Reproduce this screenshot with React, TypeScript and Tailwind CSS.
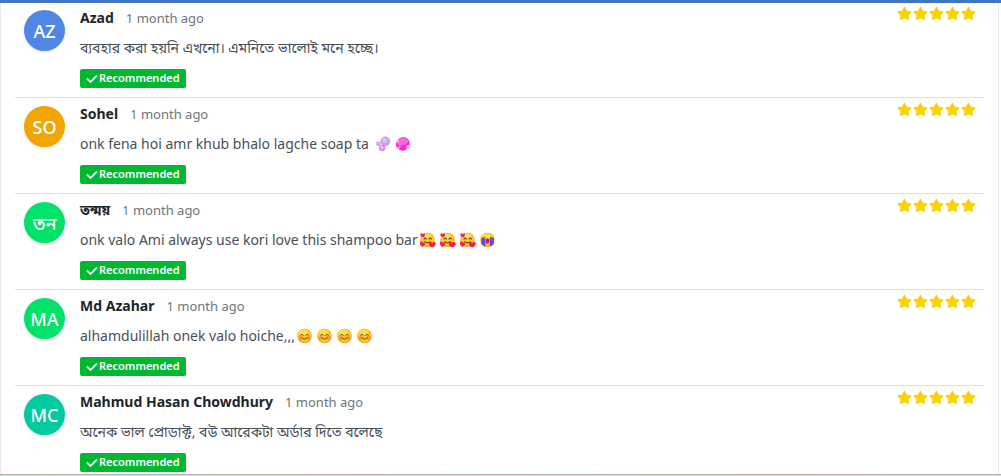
import type { ReactNode } from 'react';
import { FaCheck, FaStar } from 'react-icons/fa6';

function Emoji({ label, children }: { label: string; children: ReactNode }) {
  return (
    <svg viewBox="0 0 16 16" role="img" aria-label={label} className="size-4 shrink-0">
      {children}
    </svg>
  );
}

function Face() {
  return (
    <>
      <circle cx="7.5" cy="8" r="7.300" fill="#f9a51f" />
      <circle cx="7.200" cy="7.400" r="6.500" fill="#ffc927" />
      <ellipse cx="6.500" cy="4.400" rx="4.200" ry="2.600" fill="#ffe04a" />
    </>
  );
}

function Bubbles() {
  return (
    <Emoji label="bubbles">
      <circle cx="10.3" cy="5.3" r="4.4" fill="#cda6f3" stroke="#dc83dd" strokeWidth="0.8" />
      <circle cx="9.5" cy="4.3" r="2.200" fill="#b9d5fb" />
      <circle cx="7.2" cy="11.8" r="3" fill="#e09af0" stroke="#a98ce8" strokeWidth="0.8" />
      <circle cx="6.8" cy="11" r="1.2" fill="#f4d0fa" />
      <circle cx="3.2" cy="7.6" r="1.9" fill="#d79be9" stroke="#e678cc" strokeWidth="0.6" />
      <circle cx="2.8" cy="7.2" r="0.7" fill="#f7e5fd" />
    </Emoji>
  );
}

function Soap() {
  return (
    <Emoji label="soap">
      <path d="M2.500 4.500C4 2.200 7 .6 9 1.100c2.700.7 5 2.600 5.600 5 .7 2.700-.6 5-2.600 6.700-1.600 1.500-3.500 2.400-5.400 1.700C3.800 13.700 1.600 12.300 1 10 .6 8.200 1.300 6.200 2.500 4.500Z" fill="#f52fd3" />
      <path d="M3.300 4.700C5 2.500 7.300 1.400 9.200 2c2.400.7 3.700 2 4.100 3.500-1.500 2.700-5.500 4.500-10.500 3.300-.7-1.400-.3-2.800.5-4.100Z" fill="#ff6ad6" />
      <circle cx="2.300" cy="5" r="1.600" fill="#f7c4f3" />
      <circle cx="13.200" cy="11" r="2.100" fill="#f6c2f5" />
      <circle cx="2.800" cy="12.200" r="1.300" fill="#edbaf6" />
      <circle cx="4.800" cy="10.500" r="0.900" fill="#f99ceb" />
    </Emoji>
  );
}

function Hearts() {
  return (
    <Emoji label="smiling face with hearts">
      <Face />
      <path d="M4 7q1.2-1.700 2.400 0M9 7q1.200-1.700 2.400 0M5 9.600q2.600 2.300 5.200 0" fill="none" stroke="#6b3d16" strokeWidth="1.100" strokeLinecap="round" />
      <path d="M3 5.5C.7 4.5-.2 3 .7 1.8c.8-.9 1.800-.5 2.100.5C3.500 1.200 5 1.500 5 2.700 5 3.900 4 4.600 3 5.500Z" fill="#f01e5b" />
      <path d="M2 15C-.5 12.700-.5 10.600.6 9.800c1-.7 2.100 0 2.300 1.100.7-1 2.400-.8 2.500.5.100 1.500-1.600 2.700-3.400 3.600Z" fill="#f01e5b" />
      <path d="M12.300 15.600c-3-1.500-4.300-3.500-3.200-5.200 1-1.200 2.700-.8 3 .6 1-1.400 3.100-1.300 3.600.3.500 1.700-1.300 3.200-3.400 4.300Z" fill="#f01e5b" />
    </Emoji>
  );
}

function Crying() {
  return (
    <Emoji label="loudly crying face">
      <Face />
      <path d="M1.500 6.200h3.900v8.300C3.500 13.900 2.200 12.800 1.300 11.400ZM9.800 6.200h3.900l.2 5.200c-.9 1.400-2.200 2.500-4.100 3.100Z" fill="#6541ef" />
      <path d="M1.700 6.300 5.400 5.300M9.800 5.300l3.700 1" stroke="#6b3d16" strokeWidth="0.8" />
      <ellipse cx="7.600" cy="9" rx="1.800" ry="2.700" fill="#b01a51" />
      <ellipse cx="7.600" cy="10.500" rx="1.200" ry="0.900" fill="#f02c78" />
    </Emoji>
  );
}

function Smile() {
  return (
    <Emoji label="smiling face">
      <Face />
      <circle cx="3.300" cy="9.900" r="2" fill="#ff7d48" opacity="0.65" />
      <circle cx="11.700" cy="9.900" r="2" fill="#ff7d48" opacity="0.65" />
      <path d="M3.500 7.200Q5 5 6.300 7.200M8.700 7.200Q10 5 11.500 7.200M4.300 9.700q3.200 3 6.400 0" fill="none" stroke="#7a4316" strokeWidth="1" strokeLinecap="round" />
    </Emoji>
  );
}

type Review = {
  name: string;
  initials: string;
  color: string;
  text: string;
  emojis?: ReactNode;
};

const reviews: Review[] = [
  {
    name: 'Azad',
    initials: 'AZ',
    color: 'bg-[#5087e5]',
    text: 'ব্যবহার করা হয়নি এখনো। এমনিতে ভালোই মনে হচ্ছে।',
  },
  {
    name: 'Sohel',
    initials: 'SO',
    color: 'bg-[#f0a500]',
    text: 'onk fena hoi amr khub bhalo lagche soap ta',
    emojis: <span className="ml-1.5 flex gap-1"><Bubbles /><Soap /></span>,
  },
  {
    name: 'তন্ময়',
    initials: 'তন',
    color: 'bg-[#00e268]',
    text: 'onk valo Ami always use kori love this shampoo bar',
    emojis: <span className="ml-0.5 flex gap-1"><Hearts /><Hearts /><Hearts /><Crying /></span>,
  },
  {
    name: 'Md Azahar',
    initials: 'MA',
    color: 'bg-[#00e268]',
    text: 'alhamdulillah onek valo hoiche,,,',
    emojis: <span className="ml-0.5 flex gap-1"><Smile /><Smile /><Smile /><Smile /></span>,
  },
  {
    name: 'Mahmud Hasan Chowdhury',
    initials: 'MC',
    color: 'bg-[#00ca9f]',
    text: 'অনেক ভাল প্রোডাক্ট, বউ আরেকটা অর্ডার দিতে বলেছে',
  },
];

function ReviewRow({ review }: { review: Review }) {
  return (
    <li className="flex items-start border-b border-[#dee2e6] px-2 pt-1 pb-[9px] first:pt-[3px] last:border-b-0 last:pb-0.5">
      <div className={`mt-1 mr-[15px] ml-px flex size-[41px] shrink-0 items-center justify-center rounded-full text-lg font-medium text-white shadow-sm ${review.color}`}>
        {review.initials}
      </div>
      <div className="min-w-0 flex-1">
        <div className="flex items-center">
          <h3 className="text-sm leading-6 font-bold text-[#212529]">{review.name}</h3>
          <span className="ml-3 text-[13px] leading-6 text-[#6c757d]">1 month ago</span>
        </div>
        <p className="mt-1.5 flex items-center text-sm leading-6 text-[#495057]">
          {review.text}
          {review.emojis}
        </p>
        <span className="mt-[9px] flex h-[19px] w-fit items-center gap-px rounded-xs bg-[#00b931] px-1.5 text-[11px] font-semibold text-white">
          <FaCheck className="size-3 stroke-white stroke-[20px]" aria-hidden="true" />
          Recommended
        </span>
      </div>
      <div className="flex gap-px" role="img" aria-label="5 out of 5 stars">
        {[1, 2, 3, 4, 5].map((n) => (
          <FaStar key={n} className="size-[15px] text-[#f9d200]" />
        ))}
      </div>
    </li>
  );
}

export default function App() {
  return (
    <main className="bg-white font-['Noto_Sans','Noto_Sans_Bengali',sans-serif]">
      <div className="h-[3px] bg-[#4472c4]" />
      <section aria-label="Customer reviews" className="mr-0.5 border-x border-[#ebebeb] px-3.5">
        <ul>
          {reviews.map((review) => (
            <ReviewRow key={review.name} review={review} />
          ))}
        </ul>
      </section>
      <div className="h-0.5 border-t border-[#b3b1b0] bg-linear-to-r from-[#c8e6c4] via-[#f0d8cd] to-[#dcdcdc]" />
    </main>
  );
}
